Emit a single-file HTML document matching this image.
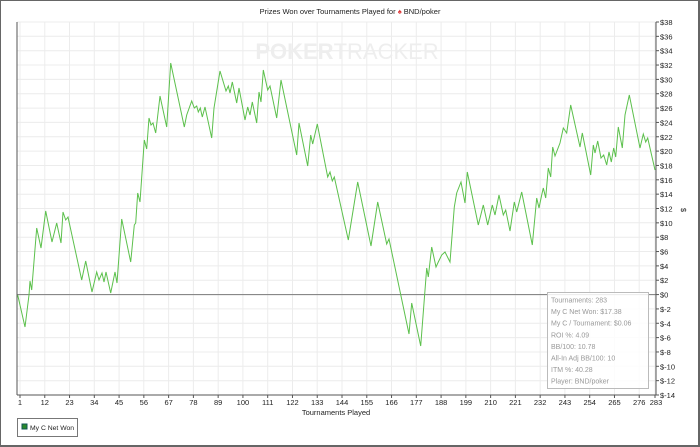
<!DOCTYPE html>
<html><head><style>
body{margin:0;background:#fff;width:700px;height:447px;overflow:hidden;font-family:"Liberation Sans",sans-serif;}
.frame{position:absolute;left:0;top:0;width:697px;height:444px;border:1px solid #666;border-right-width:2px;border-bottom-width:2px;}
</style></head><body>
<div class="frame"></div>
<div id="c"></div>
<script>
var s='';
var L=17,R=656,T=22,B=395;
var ux=635/282;
function X(v){return 20+(v-1)*ux;}
function Y(v){return T+(38-v)*(B-T)/52;}
s+='<svg width="700" height="447" style="position:absolute;left:0;top:0">';
var ticks=[1,12,23,34,45,56,67,78,89,100,111,122,133,144,155,166,177,188,199,210,221,232,243,254,265,276,283];
for(var i=0;i<ticks.length;i++){var x=X(ticks[i]).toFixed(1);s+='<line x1="'+x+'" y1="'+T+'" x2="'+x+'" y2="'+B+'" stroke="#ececec"/>';}
for(var v=-14;v<=38;v+=2){var y=Y(v).toFixed(1);s+='<line x1="'+L+'" y1="'+y+'" x2="'+R+'" y2="'+y+'" stroke="#ececec"/>';}
s+='<text x="347" y="59" font-family="Liberation Sans" font-weight="bold" font-size="22" fill="#eeeeee" text-anchor="middle">POKER<tspan font-weight="normal">TRACKER</tspan></text>';
s+='<line x1="'+L+'" y1="'+Y(0)+'" x2="'+R+'" y2="'+Y(0)+'" stroke="#888" stroke-width="1.2"/>';
s+='<line x1="'+L+'" y1="'+T+'" x2="'+L+'" y2="'+B+'" stroke="#555"/>';
s+='<line x1="'+R+'" y1="'+T+'" x2="'+R+'" y2="'+B+'" stroke="#555"/>';
s+='<line x1="'+L+'" y1="'+B+'" x2="'+R+'" y2="'+B+'" stroke="#555"/>';
for(var i=0;i<ticks.length;i++){var x=X(ticks[i]);s+='<line x1="'+x+'" y1="'+B+'" x2="'+x+'" y2="'+(B+3)+'" stroke="#555"/>';}
for(var v=-14;v<=38;v+=2){var y=Y(v);s+='<line x1="'+R+'" y1="'+y+'" x2="'+(R+3)+'" y2="'+y+'" stroke="#555"/>';}
var p="17.7,295 25,327 29,295 30,281 31.7,290 36.7,228 41,248 45.7,211 52,242 56.7,223 61,243 63,212 65.7,220 68,217 81.7,280 85.7,261 92,292 96.7,272 99,280 102,273 104,282 106,272 110.7,293 115,272 117,283 121.7,219 130.7,262 134.3,225 135.7,223 137.7,193 140,202 144.3,140 146.7,149 149,118 151,125 153,123 155.7,133 160,96 166.7,127 170.7,63 184.3,127 186.7,115 191.7,101 194.3,108 196.7,106 198.3,112 200.3,108 202.3,117 205,107 211.7,138 214,108 220,71 226,91 228.3,86 230,93 232.3,82 236.7,103 239,88 245,120 247.7,107 250,115 252.3,102 256.7,123 259,92 261,102 263.3,70 267.7,90 270,86 276.7,118 281,80 296.7,155 299,123 307.7,166 310.7,135 312.7,144 317.3,124 327.7,177 330,172 332.3,181 334.3,177 348.3,240 357.7,182 371,246 377.7,202 386.7,244 389,239 409,334 411.7,303 420.7,346 426.7,268 428.3,277 431.7,247 436,267 438.3,262 441.7,255 445,252 450,262 454.3,207 456.7,193 461,182 465,203 467.3,172 478.3,225 483.3,205 487.7,225 492.3,205 495,215 499,195 503.3,215 505.7,210 510,231 514.3,202 516.7,212 521.7,192 532.3,245 536.7,198 539,208 541.7,195 543.3,188 545.7,198 548.3,168 550.7,177 552.7,147 555,156 560,143 563.3,128 566.7,133 570.7,105 580,147 582.3,133 590.7,175 593.3,145 595,153 597.7,141 601,158 603.7,155 606.7,165 609,152 611.3,162 613.7,148 615.7,157 618.3,127 622.3,148 625,115 629.3,95 640,148 643.3,134 645.7,142 647.7,138 655,170";
s+='<polyline points="'+p+'" fill="none" stroke="#5cc04c" stroke-width="1"/>';
s+='<rect x="547.5" y="292.5" width="101" height="96" fill="#fff" fill-opacity="0.85" stroke="#bbb"/>';
var lines=["Tournaments: 283","My C Net Won: $17.38","My C / Tournament: $0.06","ROI %: 4.09","BB/100: 10.78","All-In Adj BB/100: 10","ITM %: 40.28","Player: BND/poker"];
for(var i=0;i<lines.length;i++)s+='<text x="551" y="'+(302.5+i*11.6)+'" font-family="Liberation Sans" font-size="7" fill="#999">'+lines[i]+'</text>';
for(var i=0;i<ticks.length;i++){var x=X(ticks[i]);if(ticks[i]==283)x+=1;s+='<text x="'+x+'" y="405" font-family="Liberation Sans" font-size="7.5" fill="#222" text-anchor="middle">'+ticks[i]+'</text>';}
for(var v=-14;v<=38;v+=2){s+='<text x="660" y="'+(Y(v)+3)+'" font-family="Liberation Sans" font-size="7.5" fill="#222">$'+v+'</text>';}
s+='<text x="336" y="415" font-family="Liberation Sans" font-size="7.5" fill="#222" text-anchor="middle">Tournaments Played</text>';
s+='<text transform="translate(681,210) rotate(90)" font-family="Liberation Sans" font-size="7.5" fill="#222" text-anchor="middle">$</text>';
s+='<text x="350" y="14" font-family="Liberation Sans" font-size="7.5" fill="#222" text-anchor="middle">Prizes Won over Tournaments Played for <tspan fill="#d33">&#9824;</tspan> BND/poker</text>';
s+='<rect x="17.5" y="418.5" width="60" height="18" fill="#fff" stroke="#777"/>';
s+='<rect x="22" y="424" width="5" height="5" fill="#2a8a2a" stroke="#155"/>';
s+='<text x="30" y="430" font-family="Liberation Sans" font-size="6.8" fill="#222">My C Net Won</text>';
s+='</svg>';
document.getElementById('c').innerHTML=s;
</script>
</body></html>
